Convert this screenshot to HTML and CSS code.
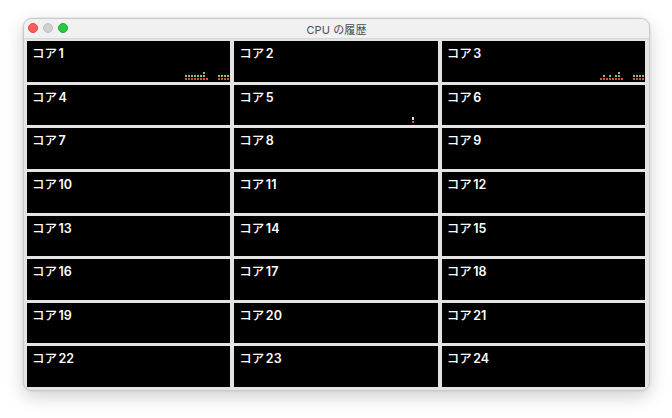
FILE: index.html
```html
<!DOCTYPE html>
<html lang="ja">
<head>
<meta charset="utf-8">
<title>CPU の履歴</title>
<link rel="stylesheet" href="styles.css">
</head>
<body>
<div class="window">
  <div class="titlebar">
    <div class="lights">
      <span class="light red"></span>
      <span class="light gray"></span>
      <span class="light green"></span>
    </div>
    <div class="title">CPU の履歴</div>
  </div>
  <div class="grid">
    <div class="core"><span class="label">コア<span class="num">1</span></span>
      <div class="graph">
        <i class="col"><b class="u"></b><b class="s"></b></i>
        <i class="col"><b class="u"></b><b class="s"></b></i>
        <i class="col"><b class="u"></b><b class="s"></b></i>
        <i class="col"><b class="u"></b><b class="s"></b></i>
        <i class="col"><b class="u"></b><b class="s"></b></i>
        <i class="col"><b class="u"></b><b class="s"></b></i>
        <i class="col"><b class="u"></b><b class="u"></b><b class="s"></b></i>
        <i class="col"><b class="s"></b></i>
        <i class="col"></i>
        <i class="col"></i>
        <i class="col"></i>
        <i class="col"><b class="u"></b><b class="s"></b></i>
        <i class="col"><b class="u"></b><b class="s"></b></i>
        <i class="col"><b class="u"></b><b class="s"></b></i>
        <i class="col"><b class="u"></b><b class="s"></b></i>
      </div>
    </div>
    <div class="core"><span class="label">コア<span class="num">2</span></span></div>
    <div class="core"><span class="label">コア<span class="num">3</span></span>
      <div class="graph">
        <i class="col"><b class="s"></b></i>
        <i class="col"><b class="u"></b><b class="s"></b></i>
        <i class="col"><b class="s"></b></i>
        <i class="col"><b class="u"></b><b class="s"></b></i>
        <i class="col"><b class="s"></b></i>
        <i class="col"><b class="u"></b><b class="s"></b></i>
        <i class="col"><b class="u"></b><b class="u"></b><b class="s"></b></i>
        <i class="col"><b class="s"></b></i>
        <i class="col"></i>
        <i class="col"></i>
        <i class="col"></i>
        <i class="col"><b class="u"></b><b class="s"></b></i>
        <i class="col"><b class="u"></b><b class="s"></b></i>
        <i class="col"><b class="u"></b><b class="s"></b></i>
        <i class="col"><b class="u"></b><b class="s"></b></i>
      </div>
    </div>
    <div class="core"><span class="label">コア<span class="num">4</span></span></div>
    <div class="core"><span class="label">コア<span class="num">5</span></span>
      <div class="graph mid">
        <i class="col"><b class="w"></b><b class="s"></b></i>
      </div>
    </div>
    <div class="core"><span class="label">コア<span class="num">6</span></span></div>
    <div class="core"><span class="label">コア<span class="num">7</span></span></div>
    <div class="core"><span class="label">コア<span class="num">8</span></span></div>
    <div class="core"><span class="label">コア<span class="num">9</span></span></div>
    <div class="core"><span class="label">コア<span class="num">10</span></span></div>
    <div class="core"><span class="label">コア<span class="num">11</span></span></div>
    <div class="core"><span class="label">コア<span class="num">12</span></span></div>
    <div class="core"><span class="label">コア<span class="num">13</span></span></div>
    <div class="core"><span class="label">コア<span class="num">14</span></span></div>
    <div class="core"><span class="label">コア<span class="num">15</span></span></div>
    <div class="core"><span class="label">コア<span class="num">16</span></span></div>
    <div class="core"><span class="label">コア<span class="num">17</span></span></div>
    <div class="core"><span class="label">コア<span class="num">18</span></span></div>
    <div class="core"><span class="label">コア<span class="num">19</span></span></div>
    <div class="core"><span class="label">コア<span class="num">20</span></span></div>
    <div class="core"><span class="label">コア<span class="num">21</span></span></div>
    <div class="core"><span class="label">コア<span class="num">22</span></span></div>
    <div class="core"><span class="label">コア<span class="num">23</span></span></div>
    <div class="core"><span class="label">コア<span class="num">24</span></span></div>
  </div>
</div>
</body>
</html>
```
FILE: styles.css
```css
html, body {
  margin: 0;
  padding: 0;
  background: #ffffff;
}
body {
  width: 672px;
  height: 418px;
  overflow: hidden;
  font-family: "Inter", "Noto Sans CJK JP", sans-serif;
}
.window {
  margin: 18px 0 0 23px;
  width: 627px;
  height: 373px;
  box-sizing: border-box;
  border: 1px solid #c9c9c9;
  border-radius: 9px;
  background: #e4e4e4;
  box-shadow: 0 6px 18px rgba(0, 0, 0, 0.18), 0 0 2px rgba(0, 0, 0, 0.15);
  display: flex;
  flex-direction: column;
  overflow: hidden;
}
.titlebar {
  height: 19px;
  flex: none;
  position: relative;
  display: flex;
  align-items: center;
  justify-content: center;
  background: #f2f1f2;
  border-bottom: 1px solid #d6d6d6;
}
.lights {
  position: absolute;
  left: 4px;
  top: 4px;
  display: flex;
  gap: 5px;
}
.light {
  width: 10px;
  height: 10px;
  border-radius: 50%;
  box-sizing: border-box;
}
.light.red { background: #fe5f57; border: 0.5px solid #e2463f; }
.light.gray { background: #d0cfd0; border: 0.5px solid #bdbdbd; }
.light.green { background: #28c840; border: 0.5px solid #1daa2e; }
.title {
  font-size: 11px;
  color: #4c4c4c;
  letter-spacing: 0.1px;
}
.grid {
  flex: 1;
  display: grid;
  grid-template-columns: repeat(3, 1fr);
  grid-template-rows: repeat(8, 1fr);
  column-gap: 4px;
  row-gap: 3px;
  padding: 2px 4px 3px 3px;
  background: #e4e4e4;
}
.core {
  background: #000000;
  display: flex;
  flex-direction: column;
  justify-content: space-between;
  padding: 5px 0 2px 5px;
  min-height: 0;
}
.label {
  color: #ffffff;
  font-size: 12.5px;
  font-weight: 500;
  line-height: 16px;
}
.num {
  margin-left: 1.5px;
  font-weight: 600;
}
.graph {
  align-self: flex-end;
  display: flex;
  align-items: flex-end;
  gap: 1px;
  padding-right: 1px;
}
.graph.mid {
  margin-right: 23px;
}
.col {
  width: 2px;
  display: flex;
  flex-direction: column;
  gap: 1px;
}
.col b {
  display: block;
  width: 2px;
  height: 2px;
}
.col b.u { background: #7fc76a; }
.col b.s { background: #d9534a; }
.col b.w { background: #f0e0c0; height: 3px; }
```
